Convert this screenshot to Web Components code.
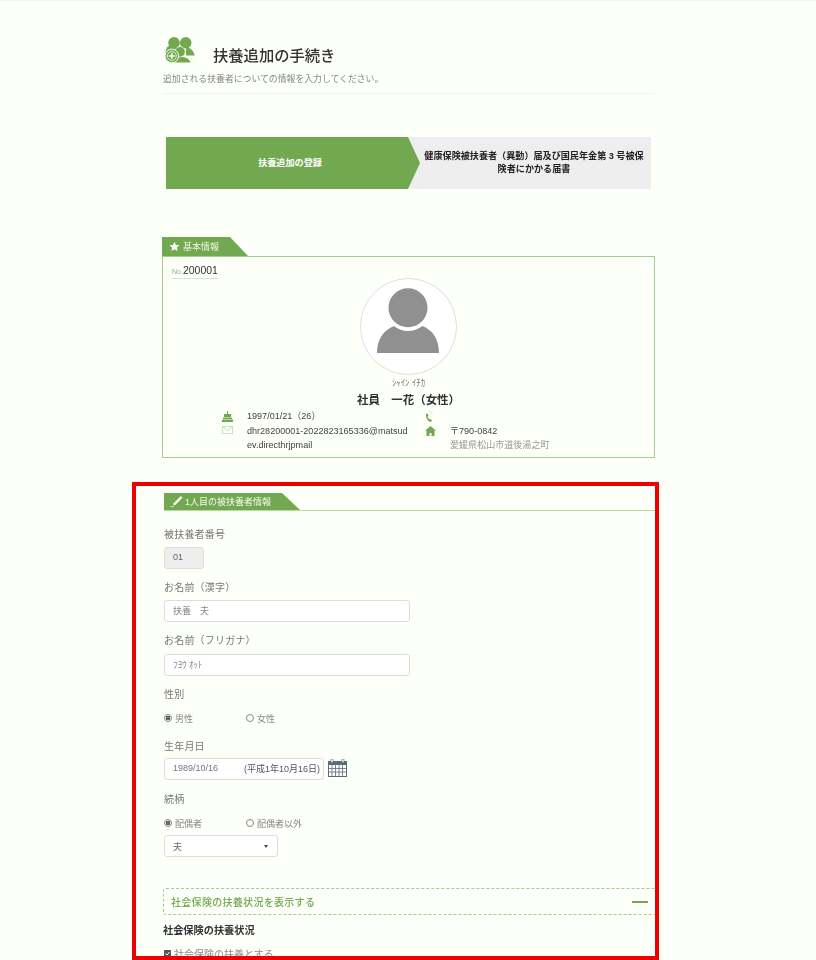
<!DOCTYPE html>
<html lang="ja">
<head>
<meta charset="utf-8">
<title>扶養追加の手続き</title>
<style>
    html, body { margin: 0; height: 960px; overflow: hidden; }
    body {
        background: #fdfff9;
        color: #333;
        font-family: "Liberation Sans", "Noto Sans CJK JP", sans-serif;
    }
    .shell {
        position: relative;
        height: 959px;
        overflow: hidden;
        border-top: 1px solid #f3f3f0;
        box-sizing: content-box;
    }
    .content {
        display: flex;
        flex-direction: column;
        width: 492px;
        margin-left: 163px;
        padding-top: 36px;
        filter: blur(.3px);
    }
</style>
</head>
<body>
<div class="shell">
    <div class="content">
        <page-header titulo="扶養追加の手続き" sub="追加される扶養者についての情報を入力してください。"></page-header>
        <step-bar style="margin-top:43px"></step-bar>
        <section-tab icon="star" style="margin-top:48px;width:86px;margin-left:-1px">基本情報</section-tab>
        <profile-card style="margin-left:-1px"></profile-card>
        <section-tab icon="pencil" line style="margin-top:35px;margin-left:1px;--tab-h:17px;--tab-pad:6px;--tab-gap:2px">1人目の被扶養者情報</section-tab>

        <form-field label="被扶養者番号" style="margin-top:16px">
            <text-box value="01" readonly style="width:40px"></text-box>
        </form-field>
        <form-field label="お名前（漢字）" style="margin-top:11px">
            <text-box value="扶養　夫" style="width:246px"></text-box>
        </form-field>
        <form-field label="お名前（フリガナ）" gap="7" style="margin-top:11px">
            <text-box value="ﾌﾖｳ ｵｯﾄ" style="width:246px"></text-box>
        </form-field>
        <form-field label="性別" gap="10" style="margin-top:11px">
            <radio-row first="男性" second="女性"></radio-row>
        </form-field>
        <form-field label="生年月日" gap="5" style="margin-top:14px">
            <date-box value="1989/10/16" wareki="(平成1年10月16日)"></date-box>
        </form-field>
        <form-field label="続柄" gap="10" style="margin-top:12px">
            <radio-row first="配偶者" second="配偶者以外"></radio-row>
        </form-field>
        <select-box value="夫" style="margin:5px 0 0 1px"></select-box>

        <toggle-panel style="margin:31px -2px 0 0">社会保険の扶養状況を表示する</toggle-panel>
        <check-group titulo="社会保険の扶養状況" label="社会保険の扶養とする" style="margin-top:9px"></check-group>
    </div>
    <red-frame></red-frame>
</div>

<script>
const ICONS = {
    star: `<svg viewBox="0 0 24 24" width="11" height="11"><path fill="#fff" d="M12 1.500l3.200 7 7.600.8-5.700 5.100 1.600 7.500L12 18l-6.700 3.900 1.600-7.500L1.200 9.300l7.600-.8z"/></svg>`,
    pencil: `<svg viewBox="0 0 24 24" width="13" height="13"><path fill="#fff" d="M20 2l3 3L10 18l-4 1 1-4z"/><path fill="none" stroke="#fff" stroke-width="1.500" d="M1 21c2 1 5 1 7-1"/></svg>`
};

class PageHeader extends HTMLElement {
    constructor() {
        super();
        this.attachShadow({ mode: 'open' });
    }

    connectedCallback() {
        this.shadowRoot.innerHTML = `
        <style>
            :host { display: block; }
            .top { display: flex; align-items: flex-end; padding-left: 2px; }
            svg { display: block; }
            h1 {
                margin: 0 0 -3px 18px;
                font-size: 15.300px;
                line-height: 20px;
                font-weight: 500;
                color: #333;
            }
            p {
                margin: 9px 0 0;
                font-size: 8.850px;
                line-height: 14px;
                color: #888;
                padding-bottom: 7px;
                border-bottom: 1px solid #f3f4ee;
            }
        </style>
        <div class="top">
            <svg width="30" height="26" viewBox="0 0 30 26">
                <circle cx="9" cy="5.800" r="5.800" fill="#72a950"/>
                <circle cx="20.700" cy="5.800" r="5.800" fill="#72a950"/>
                <path fill="#72a950" d="M3.500 9C1.500 10.500.5 13 .5 16L12 13V9z"/>
                <path fill="#72a950" d="M22 10.500c4 .5 6.500 3.500 7.800 8H21V10.500z"/>
                <path fill="#72a950" d="M9 25.500c0-4 2-5.500 6.500-5.500 5.500 0 8.500 1.500 10 5.500z"/>
                <circle cx="15" cy="14.700" r="5.200" fill="#72a950" stroke="#fdfff9" stroke-width=".6"/>
                <circle cx="6.800" cy="19" r="6.800" fill="#72a950" stroke="#fdfff9" stroke-width="1"/>
                <circle cx="6.800" cy="19" r="4.500" fill="none" stroke="#fdfff9" stroke-width=".8"/>
                <path stroke="#fdfff9" stroke-width="1.400" d="M3.800 19h6M6.800 16v6"/>
            </svg>
            <h1>${this.getAttribute("titulo")}</h1>
        </div>
        <p>${this.getAttribute("sub")}</p>
        `;
    }
}

class StepBar extends HTMLElement {
    constructor() {
        super();
        this.attachShadow({ mode: 'open' });
    }

    connectedCallback() {
        this.shadowRoot.innerHTML = `
        <style>
            :host {
                display: grid;
                grid-template-columns: 254px 1fr;
                width: 485px;
                height: 52px;
                margin-left: 3px;
                background: #eeeeef;
                font-size: 9.100px;
                font-weight: 700;
                line-height: 13px;
                text-align: center;
            }
            .on, .off { display: flex; align-items: center; justify-content: center; }
            .on {
                padding-right: 6px;
                color: #fff;
                background: #72a950;
                clip-path: polygon(0 0, 242px 0, 254px 50%, 242px 100%, 0 100%);
            }
            .off { color: #222; padding: 0 3px 0 0; }
        </style>
        <div class="on">扶養追加の登録</div>
        <div class="off">健康保険被扶養者（異動）届及び国民年金第 3 号被保<br>険者にかかる届書</div>
        `;
    }
}

class SectionTab extends HTMLElement {
    constructor() {
        super();
        this.attachShadow({ mode: 'open' });
    }

    connectedCallback() {
        const icon = ICONS[this.getAttribute("icon")] || "";
        this.shadowRoot.innerHTML = `
        <style>
            :host {
                display: block;
                line-height: 0;
                border-bottom: ${this.hasAttribute("line") ? "1px solid #b9d8a6" : "0"};
            }
            .tab {
                display: inline-flex;
                align-items: center;
                gap: var(--tab-gap, 3px);
                box-sizing: border-box;
                height: var(--tab-h, 19px);
                padding: 0 29px 0 var(--tab-pad, 7px);
                color: #f4f9ef;
                background: #72a950;
                font-size: 9px;
                line-height: 12px;
                clip-path: polygon(0 0, calc(100% - 18px) 0, 100% 100%, 0 100%);
            }
            svg { display: block; }
        </style>
        <div class="tab">${icon}<slot></slot></div>
        `;
    }
}

class ProfileCard extends HTMLElement {
    constructor() {
        super();
        this.attachShadow({ mode: 'open' });
    }

    connectedCallback() {
        this.shadowRoot.innerHTML = `
        <style>
            :host {
                display: block;
                box-sizing: border-box;
                height: 202px;
                padding: 3px 9px 0;
                border: 1px solid #a4cd8e;
            }
            .no {
                display: inline-block;
                font-size: 10.500px;
                line-height: 13px;
                color: #333;
                border-bottom: 1px solid #d5e6ca;
            }
            .no small { font-size: 7px; color: #8fb57a; }
            .center { display: flex; flex-direction: column; align-items: center; margin-top: -1px; }
            svg { display: block; }
            .kana { margin-top: 2px; font-size: 8.800px; line-height: 12px; color: #777; }
            .name { margin-top: 3px; font-size: 11.450px; line-height: 16px; font-weight: 700; color: #333; }
            .info {
                display: grid;
                grid-template-columns: 25px 178px 25px 1fr;
                margin: 1px 0 0 50px;
                font-size: 9.050px;
                line-height: 14.500px;
                color: #444;
            }
            .ic { display: flex; align-items: flex-start; padding-top: 2px; height: 12px; }
            .gray { color: #999; }
        </style>
        <div class="no"><small>No.</small>200001</div>
        <div class="center">
            <svg width="97" height="97" viewBox="0 0 97 97">
                <circle cx="48.500" cy="48.500" r="48" fill="#fff" stroke="#dedede"/>
                <circle cx="48" cy="29.700" r="19.500" fill="#909090"/>
                <path fill="#909090" d="M17 75C17 61 24 52 34 48c4 3.500 9 5 14 5s10-1.500 14.500-5C72.500 52 79 61 79 75z"/>
            </svg>
            <div class="kana">ｼｬｲﾝ ｲﾁｶ</div>
            <div class="name">社員　一花（女性）</div>
        </div>
        <div class="info">
            <div class="ic"><svg width="11" height="11" viewBox="0 0 11 11"><path fill="#72a950" d="M5 0h1v3H5zM2 3h7v3H2zM1 6.500h9V8H1zM0 8.500h11V11H0z"/></svg></div>
            <div>1997/01/21（26）</div>
            <div class="ic"><svg width="8" height="11" viewBox="0 0 8 11"><path fill="#72a950" d="M1 3c.6-.8 1.500-.8 2 0l.5 1.500-.8.8c0 1 .8 2.300 1.800 3l.8-.4L7 9.200C6.500 10.500 5.500 11 4.500 10.500 2.300 9.500.500 5.500 1 3z"/><path fill="none" stroke="#b6d3a4" stroke-width=".6" d="M4 .5c1.500 0 3 1.200 3.200 3"/></svg></div>
            <div></div>
            <div class="ic"><svg width="11" height="8" viewBox="0 0 11 8"><path fill="none" stroke="#b6d3a4" stroke-width=".8" d="M.4.400h10.200v7.200H.4zM.4.400l5.100 4 5.100-4"/></svg></div>
            <div>dhr28200001-2022823165336@matsud<br>ev.directhrjpmail</div>
            <div class="ic"><svg width="11" height="10" viewBox="0 0 11 10"><path fill="#72a950" d="M5.500 0L11 4.800H9.500V10h-3V7h-2v3h-3V4.800H0z"/></svg></div>
            <div>〒790-0842<br><span class="gray">愛媛県松山市道後湯之町</span></div>
        </div>
        `;
    }
}

class FormField extends HTMLElement {
    constructor() {
        super();
        this.attachShadow({ mode: 'open' });
    }

    connectedCallback() {
        const gap = Number(this.getAttribute("gap") || 6);
        this.shadowRoot.innerHTML = `
        <style>
            :host { display: block; padding-left: 1px; }
            label {
                display: block;
                padding-top: 1px;
                margin-bottom: ${gap - 1}px;
                font-size: 10px;
                letter-spacing: .2px;
                line-height: 14px;
                color: #777;
            }
        </style>
        <label>${this.getAttribute("label")}</label>
        <slot></slot>
        `;
    }
}

class TextBox extends HTMLElement {
    constructor() {
        super();
        this.attachShadow({ mode: 'open' });
    }

    connectedCallback() {
        const readonly = this.hasAttribute("readonly");
        this.shadowRoot.innerHTML = `
        <style>
            :host {
                display: flex;
                align-items: center;
                box-sizing: border-box;
                height: 22px;
                padding: 0 8px 2px;
                border: 1px solid #ddd;
                border-radius: 3px;
                background: ${readonly ? "#eeeeee" : "#fff"};
                font-size: 9px;
                color: ${readonly ? "#666" : "#888"};
            }
        </style>
        ${this.getAttribute("value")}
        `;
    }
}

class DateBox extends HTMLElement {
    constructor() {
        super();
        this.attachShadow({ mode: 'open' });
    }

    connectedCallback() {
        this.shadowRoot.innerHTML = `
        <style>
            :host { display: flex; align-items: flex-start; gap: 4px; }
            .box {
                display: flex;
                align-items: center;
                justify-content: space-between;
                box-sizing: border-box;
                width: 160px;
                height: 22px;
                padding: 0 3px 2px 8px;
                border: 1px solid #ddd;
                border-radius: 3px;
                background: #fff;
                font-size: 9px;
                color: #777;
            }
            .wareki { color: #555; }
            svg { display: block; margin-top: 1px; }
        </style>
        <div class="box"><span>${this.getAttribute("value")}</span><span class="wareki">${this.getAttribute("wareki")}</span></div>
        <svg width="19" height="18" viewBox="0 0 19 18">
            <rect x=".5" y="2.500" width="18" height="15" fill="#fff" stroke="#5c6b7a"/>
            <path fill="#5c6b7a" d="M0 2h19v4H0z"/>
            <path fill="#fff" stroke="#5c6b7a" stroke-width=".6" d="M3 0h2v3.500H3zM14 0h2v3.500h-2z"/>
            <path stroke="#5c6b7a" stroke-width=".8" d="M4 6v11M7.500 6v11M11 6v11M14.500 6v11M1 9.500h17M1 13h17"/>
        </svg>
        `;
    }
}

class RadioRow extends HTMLElement {
    constructor() {
        super();
        this.attachShadow({ mode: 'open' });
    }

    connectedCallback() {
        this.shadowRoot.innerHTML = `
        <style>
            :host {
                display: grid;
                grid-template-columns: 82px 1fr;
                height: 14px;
                align-items: center;
                font-size: 9px;
                color: #888;
            }
            .opt { display: flex; align-items: center; gap: 3px; }
            i {
                display: block;
                box-sizing: border-box;
                width: 8px;
                height: 8px;
                border: 1px solid #888;
                border-radius: 50%;
                background: #fff;
            }
            i.on { background: radial-gradient(circle, #666 0 2.200px, #fff 2.600px); }
        </style>
        <div class="opt"><i class="on"></i>${this.getAttribute("first")}</div>
        <div class="opt"><i></i>${this.getAttribute("second")}</div>
        `;
    }
}

class SelectBox extends HTMLElement {
    constructor() {
        super();
        this.attachShadow({ mode: 'open' });
    }

    connectedCallback() {
        this.shadowRoot.innerHTML = `
        <style>
            :host {
                display: flex;
                align-items: center;
                justify-content: space-between;
                box-sizing: border-box;
                width: 114px;
                height: 22px;
                padding: 0 9px 0 8px;
                border: 1px solid #ddd;
                border-radius: 3px;
                background: #fff;
                font-size: 9px;
                color: #666;
            }
            b { width: 0; height: 0; border: 2.500px solid transparent; border-top: 3px solid #444; border-bottom: 0; }
        </style>
        ${this.getAttribute("value")}<b></b>
        `;
    }
}

class TogglePanel extends HTMLElement {
    constructor() {
        super();
        this.attachShadow({ mode: 'open' });
    }

    connectedCallback() {
        this.shadowRoot.innerHTML = `
        <style>
            :host {
                display: flex;
                align-items: center;
                justify-content: space-between;
                box-sizing: border-box;
                height: 27px;
                padding: 0 8px 0 7px;
                border: 1px dashed #a4cd8e;
                border-radius: 3px;
                font-size: 10px;
                font-weight: 500;
                letter-spacing: .3px;
                color: #72a950;
            }
            b { width: 16px; height: 2px; background: #72a950; }
        </style>
        <span><slot></slot></span><b></b>
        `;
    }
}

class CheckGroup extends HTMLElement {
    constructor() {
        super();
        this.attachShadow({ mode: 'open' });
    }

    connectedCallback() {
        this.shadowRoot.innerHTML = `
        <style>
            :host { display: block; }
            h2 { margin: 0; font-size: 10.200px; line-height: 14px; font-weight: 700; color: #333; }
            .row { display: flex; align-items: center; gap: 3px; margin-top: 8px; height: 14px; padding-left: 1px; font-size: 10px; color: #888; }
            svg { display: block; }
        </style>
        <h2>${this.getAttribute("titulo")}</h2>
        <div class="row">
            <svg width="7" height="7" viewBox="0 0 7 7"><rect width="7" height="7" rx="1" fill="#555"/><path fill="none" stroke="#fff" d="M1.500 3.500l1.500 1.500 2.500-3"/></svg>
            ${this.getAttribute("label")}
        </div>
        `;
    }
}

class RedFrame extends HTMLElement {
    constructor() {
        super();
        this.attachShadow({ mode: 'open' });
    }

    connectedCallback() {
        this.shadowRoot.innerHTML = `
        <style>
            :host {
                position: absolute;
                left: 132px;
                top: 481px;
                width: 527px;
                height: 478px;
                box-sizing: border-box;
                border: 4px solid #ee0000;
                pointer-events: none;
            }
        </style>
        `;
    }
}

customElements.define("page-header", PageHeader);
customElements.define("step-bar", StepBar);
customElements.define("section-tab", SectionTab);
customElements.define("profile-card", ProfileCard);
customElements.define("form-field", FormField);
customElements.define("text-box", TextBox);
customElements.define("date-box", DateBox);
customElements.define("radio-row", RadioRow);
customElements.define("select-box", SelectBox);
customElements.define("toggle-panel", TogglePanel);
customElements.define("check-group", CheckGroup);
customElements.define("red-frame", RedFrame);
</script>
</body>
</html>
